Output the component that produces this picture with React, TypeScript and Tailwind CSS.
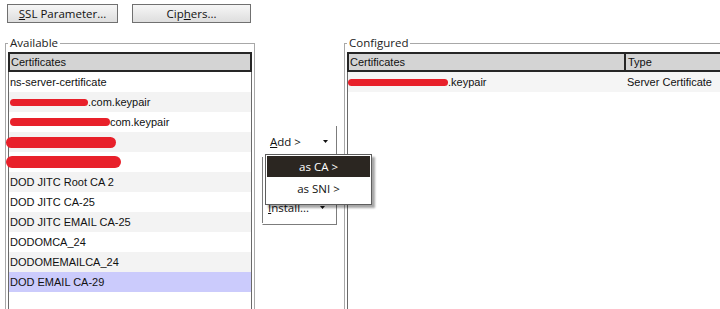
const ui = "font-['Open_Sans',sans-serif] text-[11.5px]"
const cell = "font-['Liberation_Sans',Arial,sans-serif] text-[11px] text-[#111]"

function Arrow() {
  return (
    <svg width="5" height="3" viewBox="0 0 5 3" className="block">
      <polygon points="0,0 5,0 2.5,3" fill="#111" />
    </svg>
  )
}

function Redact({ w, h = 8, ml = 0 }: { w: number; h?: number; ml?: number }) {
  return (
    <span
      className="inline-block rounded-full bg-[#e8202a] relative"
      style={{ width: w, height: h, marginLeft: ml }}
    />
  )
}

type Row = { label?: string; red?: { w: number; h?: number; ml?: number } }

const rows: Row[] = [
  { label: "ns-server-certificate" },
  { red: { w: 78, h: 7 }, label: ".com.keypair" },
  { red: { w: 100, h: 8 }, label: "com.keypair" },
  { red: { w: 110, h: 11, ml: -4 } },
  { red: { w: 115, h: 12, ml: -4 } },
  { label: "DOD JITC Root CA 2" },
  { label: "DOD JITC CA-25" },
  { label: "DOD JITC EMAIL CA-25" },
  { label: "DODOMCA_24" },
  { label: "DODOMEMAILCA_24" },
  { label: "DOD EMAIL CA-29" },
]

function WinButton({ children, w }: { children: React.ReactNode; w: string }) {
  return (
    <div
      className={`${w} h-[19px] border border-[#707070] bg-gradient-to-b from-[#f6f6f6] to-[#dedede] flex items-center justify-center text-[#111] ${ui}`}
    >
      {children}
    </div>
  )
}

function App() {
  return (
    <div className="w-[720px] h-[309px] overflow-hidden bg-white">
      <div className="flex gap-[14px] pt-[4px] pl-[7px]">
        <WinButton w="w-[111px]">
          <span>
            <span className="underline">S</span>SL Parameter...
          </span>
        </WinButton>
        <WinButton w="w-[119px]">
          <span>
            Cip<span className="underline">h</span>ers...
          </span>
        </WinButton>
      </div>

      <div className="flex mt-[13px]">
        {/* Available */}
        <fieldset className="ml-[5px] w-[250px] h-[290px] border border-[#a8a8a8] px-[2px] pt-[2px] shrink-0">
          <legend className={`px-[2px] leading-[14px] text-[#222] ${ui}`}>Available</legend>
          <div className="h-[20px] border-2 border-[#262626] bg-[#d4d4d4] flex items-center pl-[1px]">
            <span className={cell}>Certificates</span>
          </div>
          <div className="border-x border-[#6a6a6a] h-[260px]">
            {rows.map((r, i) => {
              const last = i === rows.length - 1
              const bg = last ? "bg-[#cbcbfc]" : i % 2 === 1 ? "bg-[#f3f3f3]" : "bg-white"
              return (
                <div key={i} className={`h-[20px] flex items-center pl-[1px] ${bg}`}>
                  {r.red && <Redact {...r.red} />}
                  {r.label && <span className={cell}>{r.label}</span>}
                </div>
              )
            })}
          </div>
        </fieldset>

        {/* middle actions */}
        <div className="w-[89px] shrink-0">
          <div className="relative ml-[7px] mt-[90px] w-[75px] h-[99px] border-r border-b border-l border-[#7c7c7c] border-l-transparent">
            <div className={`h-[31px] flex items-center justify-between pl-[7px] pr-[8px] text-[#111] ${ui}`}>
              <span>
                <span className="underline">A</span>dd &gt;
              </span>
              <Arrow />
            </div>
            <div className="h-[35px] border-l border-[#7c7c7c] ml-[-1px]" />
            <div className={`h-[31px] flex items-center justify-between pl-[5px] pr-[11px] border-l border-[#7c7c7c] ml-[-1px] text-[#111] ${ui}`}>
              <span>
                <span className="underline">I</span>nstall...
              </span>
              <Arrow />
            </div>

            <div className="absolute left-[2px] top-[28px] w-[107px] h-[51px] border border-[#5e5e5e] bg-white p-[1px] shadow-[3px_3px_2px_rgba(0,0,0,0.35)]">
              <div className={`h-[21px] bg-[#2b2621] text-white flex items-center justify-center ${ui}`}>as CA &gt;</div>
              <div className={`h-[24px] text-[#111] flex items-center justify-center ${ui}`}>as SNI &gt;</div>
            </div>
          </div>
        </div>

        {/* Configured */}
        <fieldset className="w-[400px] h-[290px] border border-[#a8a8a8] px-[2px] pt-[2px] shrink-0">
          <legend className={`px-[2px] leading-[14px] text-[#222] ${ui}`}>Configured</legend>
          <div className="h-[20px] flex border-2 border-[#262626] bg-[#d4d4d4]">
            <div className="w-[277px] border-r-2 border-[#262626] flex items-center pl-[1px]">
              <span className={cell}>Certificates</span>
            </div>
            <div className="flex-1 flex items-center pl-[2px]">
              <span className={cell}>Type</span>
            </div>
          </div>
          <div className="border-l border-[#6a6a6a] h-[260px]">
            <div className="h-[20px] flex bg-[#f5f5f5]">
              <div className="w-[279px] flex items-center">
                <Redact w={100} h={7} />
                <span className={cell}>.keypair</span>
              </div>
              <div className="flex items-center">
                <span className={cell}>Server Certificate</span>
              </div>
            </div>
          </div>
        </fieldset>
      </div>
    </div>
  )
}

export default App
